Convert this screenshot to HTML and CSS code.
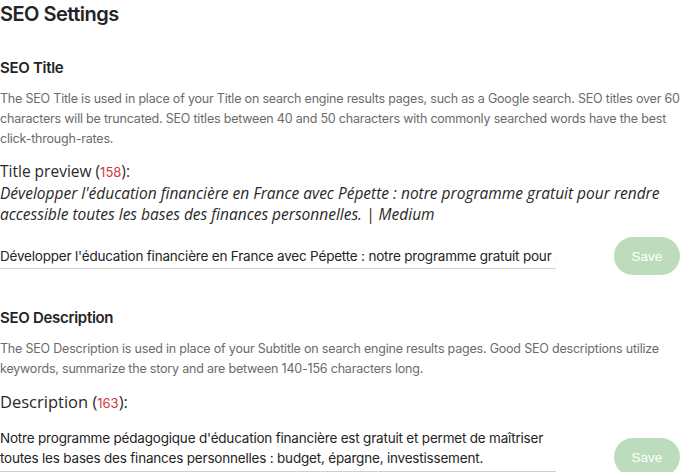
FILE: index.html
```html
<!DOCTYPE html>
<html>
<head>
<meta charset="utf-8">
<link rel="stylesheet" href="styles.css">
</head>
<body>
<div class="page">
  <h1 class="title">SEO Settings</h1>

  <section class="section">
    <h2 class="heading">SEO Title</h2>
    <p class="help">The SEO Title is used in place of your Title on search engine results pages, such as a Google search. SEO titles over 60 characters will be truncated. SEO titles between 40 and 50 characters with commonly searched words have the best click-through-rates.</p>
    <div class="label">Title preview (<span class="count">158</span>):</div>
    <div class="preview">Développer l'éducation financière en France avec Pépette : notre programme gratuit pour rendre accessible toutes les bases des finances personnelles. | Medium</div>
    <div class="row first-row">
      <input class="field single" type="text" value="Développer l'éducation financière en France avec Pépette : notre programme gratuit pour rendre accessible toutes les bases des finances personnelles.">
      <button class="save">Save</button>
    </div>
  </section>

  <section class="section second">
    <h2 class="heading">SEO Description</h2>
    <p class="help">The SEO Description is used in place of your Subtitle on search engine results pages. Good SEO descriptions utilize keywords, summarize the story and are between 140-156 characters long.</p>
    <div class="label desc-label">Description (<span class="count">163</span>):</div>
    <div class="row">
      <div class="field multi">Notre programme pédagogique d'éducation financière est gratuit et permet de maîtriser toutes les bases des finances personnelles : budget, épargne, investissement.</div>
      <button class="save save-low">Save</button>
    </div>
  </section>
</div>
</body>
</html>
```
FILE: styles.css
```css
* { box-sizing: border-box; }
html, body { margin: 0; padding: 0; background: #fff; }
body { font-family: Inter, "Liberation Sans", sans-serif; color: #242424; }
.page { width: 680px; overflow: hidden; }
.title {
  margin: 0;
  padding-top: 1px;
  font-size: 20px;
  line-height: 26px;
  font-weight: 600;
  letter-spacing: -0.5px;
  color: #242424;
}
.section { padding-top: 30px; }
.section.second { padding-top: 38px; }
.heading {
  margin: 0;
  font-size: 15px;
  line-height: 22px;
  font-weight: 600;
  letter-spacing: -0.3px;
  color: #242424;
}
.help {
  margin: 10px 0 0;
  font-size: 12.5px;
  line-height: 20px;
  color: #6b6b6b;
  letter-spacing: -0.2px;
}
.label {
  margin-top: 12px;
  font-family: "Open Sans", "Noto Sans", sans-serif;
  font-size: 15.5px;
  line-height: 21px;
  color: #292929;
}
.count { color: #d0393f; font-family: Inter, sans-serif; font-size: 13px; }
.preview {
  font-family: "Open Sans", "Noto Sans", sans-serif;
  font-style: italic;
  font-size: 15.5px;
  line-height: 21px;
  color: #292929;
}
.row {
  display: flex;
  align-items: flex-end;
  justify-content: space-between;
  margin-top: 14px;
}
.first-row { margin-top: 12px; }
.field {
  width: 556px;
  font-family: Inter, "Liberation Sans", sans-serif;
  font-size: 13.5px;
  line-height: 20px;
  color: #242424;
  border: none;
  border-bottom: 1px solid #cfcfcf;
  letter-spacing: -0.2px;
  padding: 0;
  margin: 0;
  background: transparent;
  outline: none;
}
.field.single {
  height: 23px;
  padding-bottom: 2px;
}
.field.multi { padding-bottom: 3px; }
.save {
  width: 66px;
  height: 38px;
  border: none;
  border-radius: 19px;
  background: #bcdcbc;
  color: #fff;
  font-family: "Liberation Sans", Arial, sans-serif;
  font-size: 13.5px;
  padding: 0;
  margin-bottom: -6px;
}
.save-low { margin-bottom: -4px; }
.desc-label { margin-top: 12px; font-size: 16.5px; }
```
